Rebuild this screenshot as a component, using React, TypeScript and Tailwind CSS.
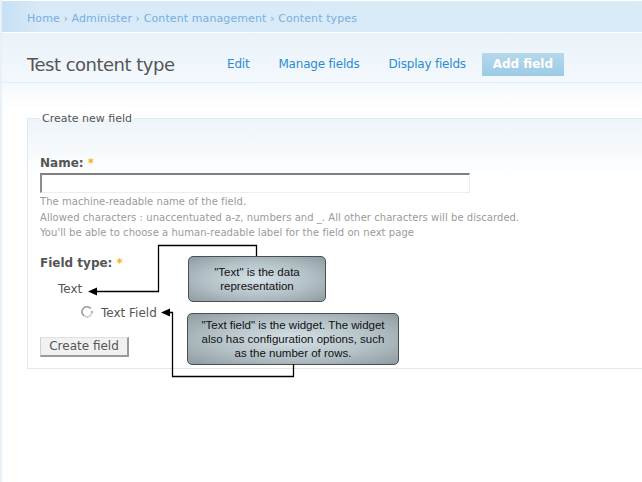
import React from "react";

function RadioIcon() {
  return (
    <svg width="13" height="13" viewBox="0 0 13 13" className="shrink-0">
      <path d="M9.8 2.6 A5 5 0 1 0 10.9 5" fill="none" stroke="#9a9a9a" strokeWidth="1.6" />
      <path d="M3 9.8 A5 5 0 0 0 10.9 7" fill="none" stroke="#e4e4e4" strokeWidth="1.4" />
    </svg>
  );
}

function Connectors() {
  return (
    <svg className="absolute left-[-2px] top-0 pointer-events-none" width="642" height="482" viewBox="0 0 642 482">
      <path d="M256.5 256 V245.5 H158.5 V291.5 H96" fill="none" stroke="#000" strokeWidth="1.3" />
      <polygon points="88,291.5 97,287.5 97,295.5" fill="#000" />
      <path d="M293.5 364 V376.5 H172.5 V312.5 H168" fill="none" stroke="#000" strokeWidth="1.3" />
      <polygon points="161,312.5 170,308.5 170,316.5" fill="#000" />
    </svg>
  );
}

export default function App() {
  return (
    <div className="relative w-[642px] h-[482px] overflow-hidden bg-white font-['DejaVu_Sans',sans-serif] border-l-2 border-[#e8f0f8]">
      {/* breadcrumb bar */}
      <div className="mt-[1px] h-[32px] border-b border-white bg-[linear-gradient(90deg,#c6e0f5_0%,#d8e9f7_6%,#daebf8_100%)] flex items-center pt-[6px] px-[25px]">
        <span className="text-[11px] text-[#79afdd] tracking-[0.1px]">
          Home › Administer › Content management › Content types
        </span>
      </div>

      {/* title + tabs */}
      <div className="h-[50px] border-b border-[#e2edf6] bg-[linear-gradient(180deg,#eaf3fa,#f3f8fc)] flex items-start pt-[20px] pl-[25px]">
        <h1 className="w-[200px] text-[18px] leading-[23px] text-[#555] tracking-[-0.5px] font-normal">Test content type</h1>
        <nav className="flex items-center text-[12px] leading-[23px] text-[#2b8dcf] tracking-[-0.2px]">
          <a className="mr-[29px]">Edit</a>
          <a className="mr-[29px]">Manage fields</a>
          <a className="mr-[16px]">Display fields</a>
          <span className="h-[23px] w-[82px] flex items-center justify-center bg-[linear-gradient(180deg,#b6d8ec,#9ccae6)] text-white font-bold tracking-normal">
            Add field
          </span>
        </nav>
      </div>

      <div className="h-[28px] bg-[linear-gradient(180deg,#f5f9fc,#ffffff)]" />

      {/* fieldset */}
      <fieldset className="ml-[25px] border border-r-0 border-[#dde9f3] bg-[linear-gradient(180deg,#edf4fa_0px,#ffffff_60px)] pl-[12px] pb-[11px]">
        <legend className="px-[2px] text-[11px] leading-[15px] text-[#555]">Create new field</legend>

        <div className="mt-[29px] text-[12px] leading-[16px] font-bold text-[#555]">
          Name: <span className="text-[#f4b21f]">*</span>
        </div>
        <div className="mt-[2px] h-[20px] w-[430px] bg-white border-t-2 border-l-2 border-r border-b border-t-[#808080] border-l-[#8c8c8c] border-r-[#eeeeee] border-b-[#eeeeee]" />
        <div className="mt-[1px] text-[10px] leading-[15.5px] text-[#9a9a9a] tracking-[0.05px]">
          <div>The machine-readable name of the field.</div>
          <div>Allowed characters : unaccentuated a-z, numbers and _. All other characters will be discarded.</div>
          <div>You'll be able to choose a human-readable label for the field on next page</div>
        </div>

        <div className="mt-[14px] text-[12px] leading-[16px] font-bold text-[#555]">
          Field type: <span className="text-[#f4b21f]">*</span>
        </div>
        <div className="mt-[10px] pl-[18px] text-[12px] leading-[16px] text-[#555]">Text</div>
        <div className="mt-[8px] pl-[41px] flex items-center gap-[7px] text-[12px] leading-[16px] text-[#555]">
          <RadioIcon />
          <span>Text Field</span>
        </div>

        <button className="mt-[16px] h-[20px] w-[89px] bg-[#f1f1f1] border-t border-l border-r-2 border-b-2 border-t-[#e0e0e0] border-l-[#cfcfcf] border-r-[#9a9a9a] border-b-[#9a9a9a] text-[12px] text-[#555] leading-[16px]">
          Create field
        </button>
      </fieldset>

      {/* callouts */}
      <div className="absolute left-[186px] top-[256px] w-[138px] h-[46px] rounded-[5px] border border-[#4a4f52] bg-[radial-gradient(ellipse_at_center,#d4e1e6_0%,#b3c1c7_55%,#8e9ba1_100%)] flex items-center justify-center text-center font-['Liberation_Sans',Arial,sans-serif] text-[11.5px] leading-[14px] text-[#111]">
        "Text" is the data
        <br />
        representation
      </div>
      <div className="absolute left-[185px] top-[313px] w-[212px] h-[52px] rounded-[5px] border border-[#4a4f52] bg-[radial-gradient(ellipse_at_center,#d4e1e6_0%,#b3c1c7_55%,#8e9ba1_100%)] flex items-center justify-center text-center font-['Liberation_Sans',Arial,sans-serif] text-[11.5px] leading-[14px] text-[#111]">
        "Text field" is the widget. The widget
        <br />
        also has configuration options, such
        <br />
        as the number of rows.
      </div>

      <Connectors />
    </div>
  );
}
